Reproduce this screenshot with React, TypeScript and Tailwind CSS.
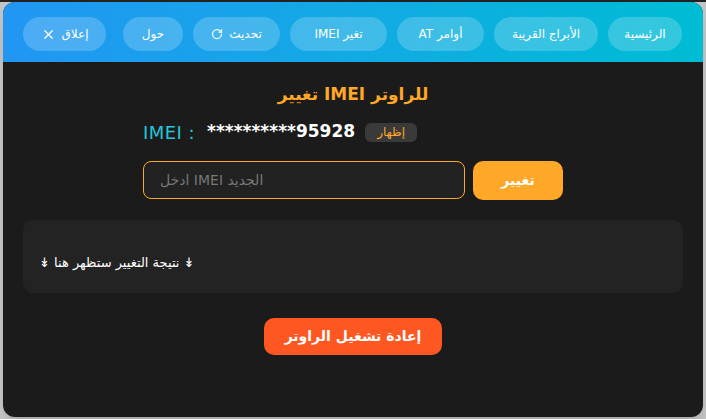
import { RotateCw, X } from "lucide-react"

// IMEI-change modal, laid over the (dimmed) router dashboard.

const NAV = [
  { label: "الرئيسية", w: "w-[74px]" },
  { label: "الأبراج القريبة", w: "w-[104px]" },
  { label: "أوامر AT", w: "w-[87px]" },
  { label: "تغير IMEI", w: "w-[97px]" },
  { label: "تحديث", w: "w-[87px]", icon: "refresh" },
  { label: "حول", w: "w-[60px]" },
]

const FONT = { fontFamily: '"DejaVu Sans", "Liberation Sans", sans-serif' }

function NavButton({ label, w, icon }: { label: string; w: string; icon?: string }) {
  return (
    <button
      className={`flex h-[34px] ${w} items-center justify-center gap-1.5 whitespace-nowrap rounded-full bg-white/20 text-[12px] text-white`}
    >
      <span>{label}</span>
      {icon === "refresh" ? <RotateCw size={12} strokeWidth={2.5} /> : null}
    </button>
  )
}

export default function App() {
  return (
    <div className="relative h-[419px] w-[706px] overflow-hidden bg-[#c4c4c4]" style={FONT}>
      <div className="h-[2px] w-full bg-[#222]" />
      <div className="mx-[3px] flex h-[415px] flex-col overflow-hidden rounded-xl bg-[#1b1b1b] shadow-lg">
        {/* nav runs right-to-left, close button pushed to the far left */}
        <div
          dir="rtl"
          className="flex h-[60px] shrink-0 items-center gap-[10px] bg-gradient-to-r from-[#2196f3] to-[#00bcd4] pl-5 pr-[21px] pt-[4px]"
        >
          {NAV.map((n) => (
            <NavButton key={n.label} label={n.label} w={n.w} icon={n.icon} />
          ))}
          <button className="mr-auto flex h-[34px] w-[83px] items-center justify-center gap-1.5 whitespace-nowrap rounded-full bg-white/20 text-[12px] text-white">
            <span>إعلاق</span>
            <X size={15} strokeWidth={2} />
          </button>
        </div>

        <div className="flex flex-col items-center pt-[20px]">
          <h2 className="text-[17px] font-bold text-[#ffa726]">تغيير IMEI للراوتر</h2>

          <div className="mt-[11px] flex w-[420px] items-center">
            <span className="text-[18px] tracking-wide text-[#26c6da]">IMEI :</span>
            <span className="ml-[12px] text-[17px] font-bold text-white">**********95928</span>
            <span
              dir="rtl"
              className="ml-[10px] flex h-[19px] w-[52px] items-center justify-center rounded-md bg-[#3a3a3a] text-[12px] text-[#ffa726]"
            >
              إظهار
            </span>
          </div>

          <div className="mt-[15px] flex w-[420px] gap-2">
            <input
              className="h-[38px] flex-1 rounded-lg border border-[#ffa726] bg-[#222] px-4 text-[14px] text-white outline-none placeholder:text-[#777]"
              placeholder="ادخل IMEI الجديد"
            />
            <div className="flex h-[39px] w-[90px] items-center justify-center rounded-[10px] bg-[#ffa726] text-[14px] font-bold text-white">
              تغيير
            </div>
          </div>
        </div>

        <div className="mx-5 mt-5 flex h-[73px] items-center rounded-[10px] bg-[#232323] px-4 pt-[14px] text-[13px] text-white">
          <span>↡ نتيجة التغيير ستظهر هنا ↡</span>
        </div>

        <div className="mt-[25px] flex justify-center">
          <button className="h-[37px] w-[178px] rounded-[10px] bg-[#ff5722] text-[14px] font-bold text-white">
            إعادة تشغيل الراوتر
          </button>
        </div>
      </div>
    </div>
  )
}
